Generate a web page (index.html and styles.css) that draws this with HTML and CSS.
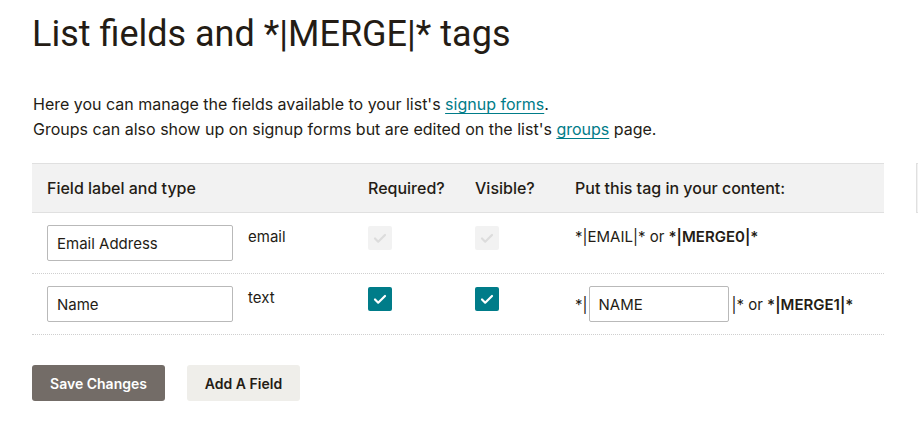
FILE: index.html
```html
<!DOCTYPE html>
<html>
<head>
<meta charset="utf-8">
<link rel="stylesheet" href="styles.css">
</head>
<body>
<div class="page">
  <h1 class="title">List fields and *|MERGE|* tags</h1>
  <p class="intro">Here you can manage the fields available to your list's <a href="#">signup forms</a>.<br>Groups can also show up on signup forms but are edited on the list's <a href="#">groups</a> page.</p>
  <div class="tables">
    <div class="table">
      <div class="row head">
        <div class="c c1">Field label and type</div>
        <div class="c c2">Required?</div>
        <div class="c c3">Visible?</div>
        <div class="c c4">Put this tag in your content:</div>
      </div>
      <div class="row body">
        <div class="c c1"><input class="field" value="Email Address"><span class="type">email</span></div>
        <div class="c c2"><span class="chk off"><svg viewBox="0 0 24 24"><path d="M7 12.5l3.2 3.2L17 9" /></svg></span></div>
        <div class="c c3"><span class="chk off"><svg viewBox="0 0 24 24"><path d="M7 12.5l3.2 3.2L17 9" /></svg></span></div>
        <div class="c c4"><span class="tagtext">*|EMAIL|* or <b>*|MERGE0|*</b></span></div>
      </div>
      <div class="row body">
        <div class="c c1"><input class="field" value="Name"><span class="type">text</span></div>
        <div class="c c2"><span class="chk on"><svg viewBox="0 0 24 24"><path d="M7 12.5l3.2 3.2L17 9" /></svg></span></div>
        <div class="c c3"><span class="chk on"><svg viewBox="0 0 24 24"><path d="M7 12.5l3.2 3.2L17 9" /></svg></span></div>
        <div class="c c4 tagedit"><span>*|</span><input class="tagfield" value="NAME"><span>|* or <b>*|MERGE1|*</b></span></div>
      </div>
    </div>
    <div class="table side">
      <div class="row head"></div>
      <div class="row body"></div>
      <div class="row body"></div>
    </div>
  </div>
  <div class="actions">
    <button class="btn primary">Save Changes</button>
    <button class="btn secondary">Add A Field</button>
  </div>
</div>
</body>
</html>
```
FILE: styles.css
```css
* { box-sizing: border-box; }
html, body { margin: 0; padding: 0; background: #fff; overflow: hidden; }
body {
  font-family: Inter, "Liberation Sans", sans-serif;
  color: #241c15;
  width: 918px;
  height: 423px;
}
.page { padding: 12px 0 0 32px; }
.title {
  margin: 0;
  font-family: Roboto, "Liberation Sans", sans-serif;
  font-size: 36px;
  font-weight: 400;
  line-height: 44px;
}
.intro {
  margin: 36px 0 0 1px;
  font-size: 16px;
  line-height: 25px;
}
.intro a { color: #007c89; text-decoration: underline; text-underline-offset: 3px; }
.tables { display: flex; gap: 32px; margin-top: 21px; width: 1100px; }
.table { width: 852px; flex: none; }
.table.side { width: 200px; }
.row { display: flex; }
.row.head {
  background: #f2f2f2;
  border-top: 1px solid #e0e0e0;
  border-bottom: 1px solid #e0e0e0;
  height: 50px;
  align-items: center;
  font-size: 16px;
  font-weight: 500;
}
.row.body {
  height: 61px;
  border-bottom: 1px dotted #cfcfcf;
  align-items: flex-start;
  font-size: 15px;
}
.c { padding-left: 15px; }
.c1 { width: 321px; display: flex; align-items: flex-start; }
.c2 { width: 107px; }
.c3 { width: 100px; }
.c4 { flex: 1; }
.body .c { padding-top: 12px; }
.field, .tagfield {
  font-family: inherit;
  font-size: 15px;
  color: #241c15;
  height: 36px;
  border: 1px solid #b9b9b9;
  border-radius: 2px;
  padding: 0 9px;
  margin: 0;
  background: #fff;
}
.field { width: 186px; padding-top: 1px; }
.type { margin-left: 15px; padding-top: 2px; }
.chk {
  display: block;
  width: 24px;
  height: 24px;
  border-radius: 2px;
  margin-top: 1px;
}
.chk svg { width: 24px; height: 24px; display: block; }
.chk path { fill: none; stroke-width: 2.2; stroke-linecap: round; stroke-linejoin: round; }
.chk.off { background: #f2f2f2; }
.chk.off path { stroke: #dcdcdc; }
.chk.on { background: #007c89; }
.chk.on path { stroke: #fff; }
.tagtext { display: block; padding-top: 2px; }
.tagtext b, .tagedit b { font-weight: 600; }
.tagedit { display: flex; align-items: center; }
.tagedit span:first-child { margin-right: 1px; }
.tagfield { width: 140px; margin-right: 3px; }
.side .row.head { border-left: 1px solid #e0e0e0; }
.side .row.body { border-bottom: none; }
.actions { display: flex; gap: 22px; margin-top: 30px; }
.btn {
  font-family: inherit;
  font-size: 14px;
  font-weight: 600;
  height: 36px;
  border: none;
  border-radius: 3px;
  padding: 0;
  cursor: pointer;
}
.btn.primary { background: #736c67; color: #fff; width: 133px; }
.btn.secondary { background: #efeeea; color: #241c15; width: 113px; }
```
